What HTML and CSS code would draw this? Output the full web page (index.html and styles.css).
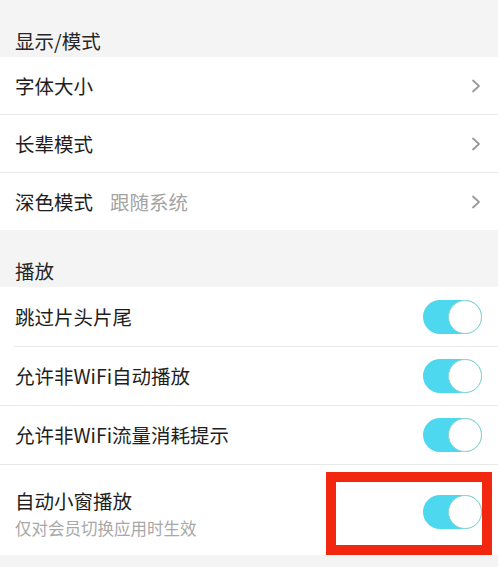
FILE: index.html
```html
<!DOCTYPE html>
<html lang="zh-CN">
<head>
<meta charset="utf-8">
<link rel="stylesheet" href="styles.css">
</head>
<body>
<div class="page">
  <div class="section-title">显示/模式</div>
  <div class="group">
    <div class="row"><span class="label">字体大小</span><svg class="chev" viewBox="0 0 10 14"><path d="M2 1.5 L8 7 L2 12.5" /></svg></div>
    <div class="row"><span class="label">长辈模式</span><svg class="chev" viewBox="0 0 10 14"><path d="M2 1.5 L8 7 L2 12.5" /></svg></div>
    <div class="row"><span class="label">深色模式</span><span class="value">跟随系统</span><svg class="chev" viewBox="0 0 10 14"><path d="M2 1.5 L8 7 L2 12.5" /></svg></div>
  </div>
  <div class="section-title">播放</div>
  <div class="group play">
    <div class="row tall inset"><span class="label">跳过片头片尾</span><span class="toggle"><span class="knob"></span></span></div>
    <div class="row tall"><span class="label">允许非WiFi自动播放</span><span class="toggle"><span class="knob"></span></span></div>
    <div class="row tall"><span class="label">允许非WiFi流量消耗提示</span><span class="toggle"><span class="knob"></span></span></div>
    <div class="row double">
      <div class="texts">
        <span class="label">自动小窗播放</span>
        <span class="sub">仅对会员切换应用时生效</span>
      </div>
      <span class="toggle"><span class="knob"></span></span>
      <div class="highlight"></div>
    </div>
  </div>
</div>
</body>
</html>
```
FILE: styles.css
```css
html, body {
  margin: 0;
  padding: 0;
  background: #f4f4f4;
}
.page {
  width: 498px;
  height: 567px;
  overflow: hidden;
  font-family: "Noto Sans CJK SC", "Noto Sans", sans-serif;
  color: #222;
  background: #f4f4f4;
}
.section-title {
  height: 57px;
  box-sizing: border-box;
  padding: 28px 0 0 15px;
  font-size: 19.5px;
  line-height: 26px;
  color: #262626;
}
.group {
  background: #fff;
}
.row {
  height: 57px;
  border-bottom: 1px solid #e8e8e8;
  display: flex;
  align-items: center;
  padding: 0 16px 0 15px;
  position: relative;
}
.group .row:last-child {
  border-bottom: none;
}
.row.tall {
  height: 58px;
}
.row.inset {
  height: 60px;
  border-bottom: none;
}
.row.inset::after {
  content: "";
  position: absolute;
  left: 14px;
  right: 0;
  bottom: 0;
  height: 1px;
  background: #e8e8e8;
}
.row.double {
  height: 90px;
}
.label {
  font-size: 19.5px;
  line-height: 26px;
  color: #1e1e1e;
}
.value {
  font-size: 19.5px;
  line-height: 26px;
  color: #a3a3a3;
  margin-left: 17px;
}
.chev {
  margin-left: auto;
  margin-right: 1px;
  width: 10px;
  height: 14px;
  fill: none;
  stroke: #9a9a9a;
  stroke-width: 1.8;
  stroke-linecap: round;
  stroke-linejoin: round;
}
.texts {
  display: flex;
  flex-direction: column;
  padding-top: 6px;
}
.sub {
  font-size: 16.5px;
  line-height: 22px;
  color: #a8a8a8;
  margin-top: 3px;
}
.toggle {
  margin-left: auto;
  width: 59px;
  height: 34px;
  border-radius: 17px;
  background: #4dd8f0;
  position: relative;
  flex-shrink: 0;
}
.knob {
  position: absolute;
  right: 0;
  top: 0;
  width: 34px;
  height: 34px;
  box-sizing: border-box;
  border-radius: 50%;
  background: #fff;
  border: 1.5px solid #8fd3cc;
}
.double .toggle {
  margin-top: 4px;
}
.highlight {
  position: absolute;
  left: 326px;
  top: 7px;
  width: 166px;
  height: 83px;
  box-sizing: border-box;
  border: 10px solid #f2270f;
}
```
